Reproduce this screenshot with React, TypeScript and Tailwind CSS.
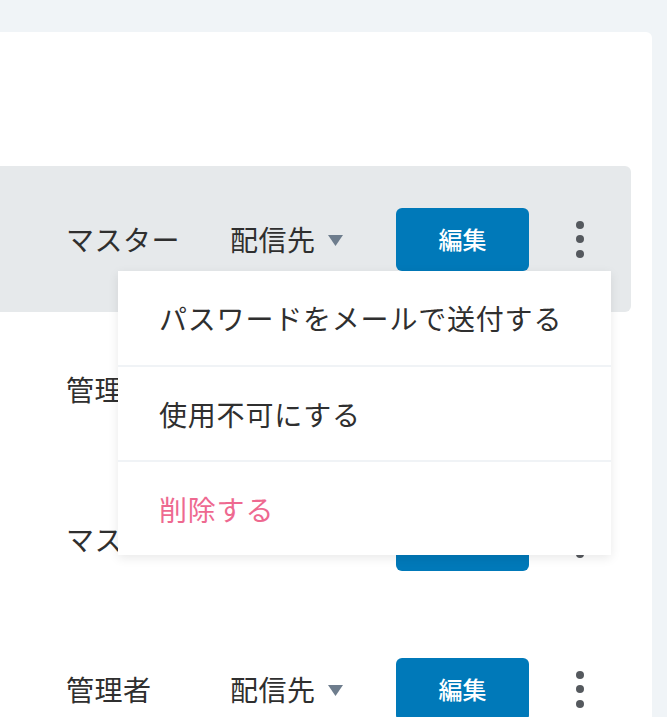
const rows = [
  { name: 'マスター', active: true },
  { name: '管理者', active: false },
  { name: 'マスター', active: false },
  { name: '管理者', active: false },
]

const menuItems = [
  { label: 'パスワードをメールで送付する', danger: false },
  { label: '使用不可にする', danger: false },
  { label: '削除する', danger: true },
]

function Kebab() {
  return (
    <div className="ml-[47px] flex flex-col items-center gap-[6.5px]">
      <span className="block w-2 h-2 rounded-full bg-[#55595e]" />
      <span className="block w-2 h-2 rounded-full bg-[#55595e]" />
      <span className="block w-2 h-2 rounded-full bg-[#55595e]" />
    </div>
  )
}

function ActionMenu() {
  return (
    <div className="absolute left-[118px] top-[105px] w-[493px] bg-white shadow-[0_3px_10px_rgba(0,0,0,0.09)] z-10">
      {menuItems.map((item, i) => (
        <div
          key={item.label}
          className={`flex items-center pl-[41px] text-[28px] tracking-[0.8px] ${
            i === 0 ? 'h-[94px]' : 'h-[95px] border-t-2 border-[#f0f3f6]'
          } ${item.danger ? 'text-[#ee6990]' : 'text-[#2f2f2f]'}`}
        >
          {item.label}
        </div>
      ))}
    </div>
  )
}

export default function App() {
  return (
    <div
      className="w-[667px] h-[717px] overflow-hidden bg-[#f0f4f7] pt-[32px] pr-[15px]"
      style={{ fontFamily: '"Noto Sans CJK JP", "Noto Sans", sans-serif' }}
    >
      <div className="h-full bg-white rounded-tr-md pt-[132px]">
        {rows.map((row, i) => (
          <div key={i} className="h-[150px] py-[2px] pr-[21px]">
            <div
              className={`relative h-full flex items-center pl-[66px] ${
                row.active ? 'bg-[#e6e9eb] rounded-r-md' : ''
              }`}
            >
              <span className="w-[164px] text-[28px] text-[#2f2f2f] leading-none tracking-[0.5px]">
                {row.name}
              </span>
              <div className="w-[166px] flex items-center">
                <span className="text-[28px] text-[#2f2f2f] leading-none tracking-[0.5px]">配信先</span>
                <svg className="ml-[12px] mt-[2px]" width="15" height="11" viewBox="0 0 15 11">
                  <path d="M0 0 H15 L7.5 11 Z" fill="#6e7d8d" />
                </svg>
              </div>
              <button className="w-[133px] h-[63px] rounded-md bg-[#0079b9] text-white text-[24px] font-medium">
                編集
              </button>
              <Kebab />
              {row.active && <ActionMenu />}
            </div>
          </div>
        ))}
      </div>
    </div>
  )
}
